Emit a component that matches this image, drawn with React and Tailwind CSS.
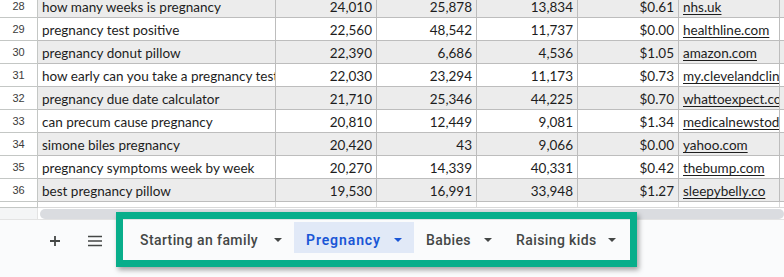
import React from "react";

const rows = [
  [28, "how many weeks is pregnancy", "24,010", "25,878", "13,834", "$0.61", "nhs.uk"],
  [29, "pregnancy test positive", "22,560", "48,542", "11,737", "$0.00", "healthline.com"],
  [30, "pregnancy donut pillow", "22,390", "6,686", "4,536", "$1.05", "amazon.com"],
  [31, "how early can you take a pregnancy test", "22,030", "23,294", "11,173", "$0.73", "my.clevelandclinic.org"],
  [32, "pregnancy due date calculator", "21,710", "25,346", "44,225", "$0.70", "whattoexpect.com"],
  [33, "can precum cause pregnancy", "20,810", "12,449", "9,081", "$1.34", "medicalnewstoday.com"],
  [34, "simone biles pregnancy", "20,420", "43", "9,066", "$0.00", "yahoo.com"],
  [35, "pregnancy symptoms week by week", "20,270", "14,339", "40,331", "$0.42", "thebump.com"],
  [36, "best pregnancy pillow", "19,530", "16,991", "33,948", "$1.27", "sleepybelly.co"],
];

const cols = "grid grid-cols-[38px_238px_101px_100px_101px_101px_101px_1fr]";

const tabs = [
  { label: "Starting an family", w: "w-[166px]" },
  { label: "Pregnancy", w: "w-[120px]", active: true },
  { label: "Babies", w: "w-[90px]" },
  { label: "Raising kids", w: "w-[124px]" },
];

const Caret = ({ className }) => (
  <svg width="8" height="4" viewBox="0 0 8 4" className={className}>
    <path d="M0 0h8L4 4z" fill="currentColor" />
  </svg>
);

const Tab = ({ label, w, active }) => (
  <div
    className={`flex items-center justify-between pl-3 pr-3 pt-[5px] h-[31px] ${w} ${
      active ? "bg-[#e1e9f7] text-[#1a56d6]" : "text-[#444746]"
    }`}
  >
    <span
      className={`text-[14px] ${
        active ? "font-semibold tracking-[0.9px]" : "font-medium tracking-[0.4px]"
      }`}
    >
      {label}
    </span>
    <Caret className={active ? "text-[#1a56d6]" : "text-[#444746]"} />
  </div>
);

const App = () => {
  return (
    <div className="relative w-[784px] h-[277px] overflow-hidden bg-white font-['Lato',sans-serif]">
      <div className="mt-[-5px]">
        {rows.map((r, i) => {
          const bg = i % 2 === 0 ? "bg-[#ececec]" : "bg-white";
          return (
            <div key={r[0]} className={`${cols} h-[23px] text-[13.5px] text-[#1d1d1d]`}>
              <div className="flex items-center justify-center border-r border-b border-[#c4c7c5] bg-white text-[11px] text-[#3c3c3c] font-['Liberation_Sans',sans-serif]">
                {r[0]}
              </div>
              <div className={`flex items-center pl-[4px] pt-[2px] border-r border-b border-[#bdbdbd] overflow-hidden whitespace-nowrap ${bg}`}>
                {r[1]}
              </div>
              {[r[2], r[3], r[4], r[5]].map((v, j) => (
                <div key={j} className={`flex items-center justify-end pr-[4px] pt-[2px] border-r border-b border-[#bdbdbd] ${bg}`}>
                  {v}
                </div>
              ))}
              <div className={`flex items-center pl-[4px] pt-[2px] border-r border-b border-[#bdbdbd] overflow-hidden whitespace-nowrap ${bg}`}>
                <span className="underline underline-offset-2">{r[6]}</span>
              </div>
              <div className={`border-b border-[#bdbdbd] ${bg}`} />
            </div>
          );
        })}
        <div className={`${cols} h-[6px]`}>
          <div className="border-r border-b border-[#c4c7c5]" />
          <div className="border-r border-b border-[#d9d9d9]" />
          <div className="border-r border-b border-[#d9d9d9]" />
          <div className="border-r border-b border-[#d9d9d9]" />
          <div className="border-r border-b border-[#d9d9d9]" />
          <div className="border-r border-b border-[#d9d9d9]" />
          <div className="border-r border-b border-[#d9d9d9]" />
          <div className="border-b border-[#d9d9d9]" />
        </div>
      </div>

      <div className="flex h-[12px] border-b border-[#e3e3e3]">
        <div className="w-[38px] bg-[#f4f5f6] border-r border-[#e3e3e3]" />
        <div className="flex-1 flex items-center pl-[2px]">
          <div className="h-[10px] w-full rounded-full bg-[#dadce0]" />
        </div>
      </div>

      <div className="h-[60px] bg-[#fafbfc] pt-[2px] font-['Roboto',sans-serif]">
        <div className="flex items-center h-[31px] pl-[47px]">
          <svg width="16" height="16" viewBox="0 0 16 16" className="mt-[6px] text-[#444746]">
            <path d="M8 3v10M3 8h10" stroke="currentColor" strokeWidth="1.8" />
          </svg>
          <svg width="16" height="16" viewBox="0 0 16 16" className="ml-[24px] mt-[6px] text-[#444746]">
            <path d="M1 3.5h14M1 8h14M1 12.5h14" stroke="currentColor" strokeWidth="1.6" />
          </svg>
          <div className="flex ml-[25px]">
            {tabs.map((t) => (
              <Tab key={t.label} {...t} />
            ))}
          </div>
        </div>
      </div>

      <div className="absolute left-[116px] top-[212px] w-[521px] h-[55px] border-[7px] border-[#08ae8b] shadow-[2px_3px_5px_rgba(0,0,0,0.35)]" />
    </div>
  );
};

export default App;
